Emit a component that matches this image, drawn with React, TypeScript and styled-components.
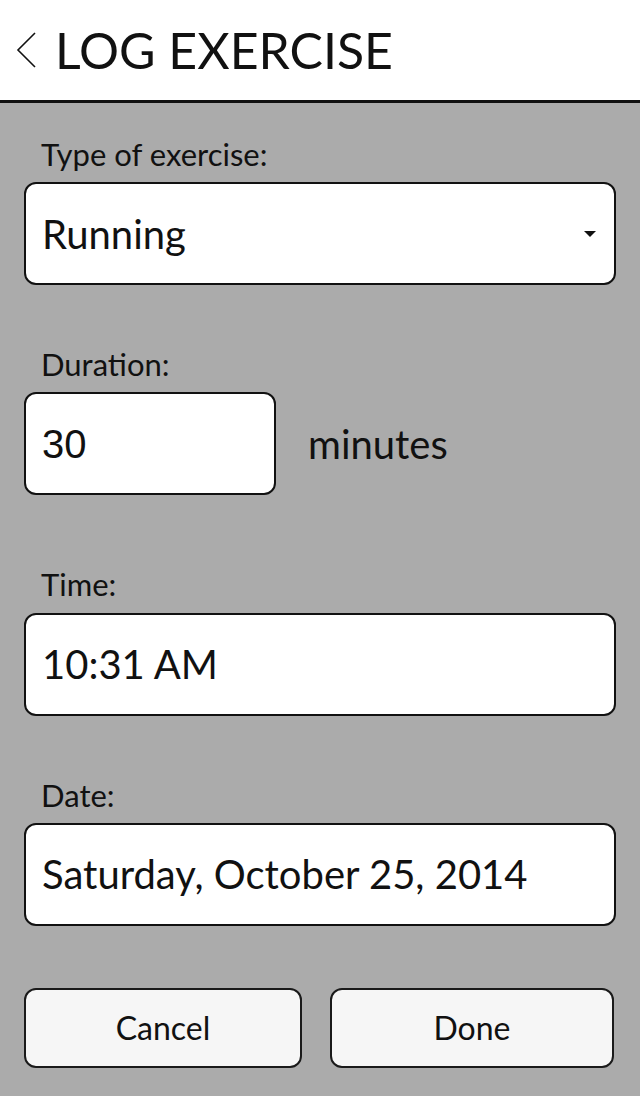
import styled, { createGlobalStyle } from 'styled-components'

const GlobalStyle = createGlobalStyle`
  html, body {
    margin: 0;
    padding: 0;
    background: #ababab;
    font-family: Lato, "Open Sans", sans-serif;
    color: #111;
  }
`

const Page = styled.div`
  width: 640px;
  min-height: 1096px;
  background: #ababab;
`

const Header = styled.header`
  height: 100px;
  background: #fff;
  border-bottom: 3px solid #111;
  display: flex;
  align-items: center;
  padding-left: 14px;
  gap: 17px;
`

const BackButton = styled.button`
  border: none;
  background: none;
  padding: 0;
  display: flex;
  cursor: pointer;
`

const Title = styled.h1`
  margin: 0;
  font-size: 50px;
  font-weight: 400;
  line-height: 1;
  color: #111;
`

const Content = styled.main`
  padding: 0 24px;
  display: flex;
  flex-direction: column;
`

const Field = styled.section<{ $top: number }>`
  margin-top: ${(p) => p.$top}px;
  display: flex;
  flex-direction: column;
`

const Label = styled.label`
  font-size: 31px;
  line-height: 1.2;
  padding-left: 17px;
  margin-bottom: 9px;
`

const Row = styled.div`
  display: flex;
  align-items: center;
  gap: 32px;
`

const Box = styled.div<{ $width?: number; $arial?: boolean }>`
  box-sizing: border-box;
  height: 103px;
  width: ${(p) => (p.$width ? `${p.$width}px` : '100%')};
  background: #fff;
  border: 2px solid #111;
  border-radius: 12px;
  display: flex;
  align-items: center;
  justify-content: space-between;
  padding: 0 18px 0 16px;
  font-size: 40px;
  line-height: 1.2;
  font-family: ${(p) => (p.$arial ? '"Liberation Sans", Arial, sans-serif' : 'Lato, sans-serif')};
`

const Unit = styled.span`
  font-size: 40px;
`

const Actions = styled.div`
  margin-top: 62px;
  display: grid;
  grid-template-columns: 278px 284px;
  gap: 28px;
`

const Button = styled.button`
  height: 80px;
  background: #f6f6f6;
  border: 2px solid #1a1a1a;
  border-radius: 12px;
  font-family: Lato, sans-serif;
  font-size: 32px;
  color: #111;
  cursor: pointer;
`

const Chevron = () => (
  <svg width="24" height="38" viewBox="0 0 24 38">
    <polyline points="21,2 4,19 21,36" fill="none" stroke="#111" strokeWidth="1.6" />
  </svg>
)

const Caret = () => (
  <svg width="12" height="6" viewBox="0 0 12 6">
    <polygon points="0,0 12,0 6,6" fill="#111" />
  </svg>
)

const App = () => {
  return (
    <>
      <GlobalStyle />
      <Page>
        <Header>
          <BackButton aria-label="Back">
            <Chevron />
          </BackButton>
          <Title>LOG EXERCISE</Title>
        </Header>
        <Content>
          <Field $top={33}>
            <Label>Type of exercise:</Label>
            <Box>
              <span>Running</span>
              <Caret />
            </Box>
          </Field>
          <Field $top={61}>
            <Label>Duration:</Label>
            <Row>
              <Box $width={252} $arial>30</Box>
              <Unit>minutes</Unit>
            </Row>
          </Field>
          <Field $top={71}>
            <Label>Time:</Label>
            <Box>10:31 AM</Box>
          </Field>
          <Field $top={61}>
            <Label>Date:</Label>
            <Box>Saturday, October 25, 2014</Box>
          </Field>
          <Actions>
            <Button>Cancel</Button>
            <Button>Done</Button>
          </Actions>
        </Content>
      </Page>
    </>
  )
}

export default App
